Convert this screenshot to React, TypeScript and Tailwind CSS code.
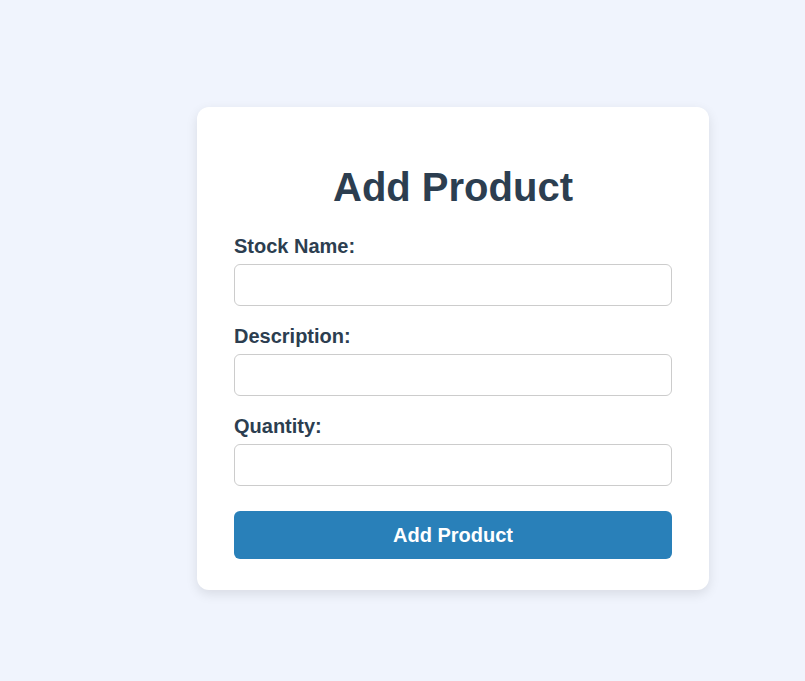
export default function App() {
  const fields = ['Stock Name:', 'Description:', 'Quantity:'];

  return (
    <div
      className="min-h-screen w-full bg-[#f0f4fd] pl-[197px] pt-[107px]"
      style={{ fontFamily: '"Liberation Sans", Arial, sans-serif' }}
    >
      <div className="w-[512px] rounded-[12px] bg-white px-[37px] pt-[57px] pb-[31px] shadow-[0_4px_12px_rgba(0,0,0,0.1)]">
        <h2 className="text-center text-[40px] font-bold leading-[46px] text-[#2c3e50]">
          Add Product
        </h2>
        <form className="mt-[23px]" onSubmit={(e) => e.preventDefault()}>
          {fields.map((label) => (
            <div key={label} className="mb-[17px]">
              <label className="block pt-[2px] text-[20px] font-bold leading-[23px] text-[#2c3e50]">
                {label}
              </label>
              <input
                type="text"
                className="mt-[6px] block h-[42px] w-full rounded-[6px] border border-[#cccccc] bg-white px-[10px] text-[16px] outline-none"
              />
            </div>
          ))}
          <button
            type="submit"
            className="mt-[25px] block h-[48px] w-full rounded-[6px] bg-[#2980b9] text-[20px] font-bold text-white"
          >
            Add Product
          </button>
        </form>
      </div>
    </div>
  );
}
